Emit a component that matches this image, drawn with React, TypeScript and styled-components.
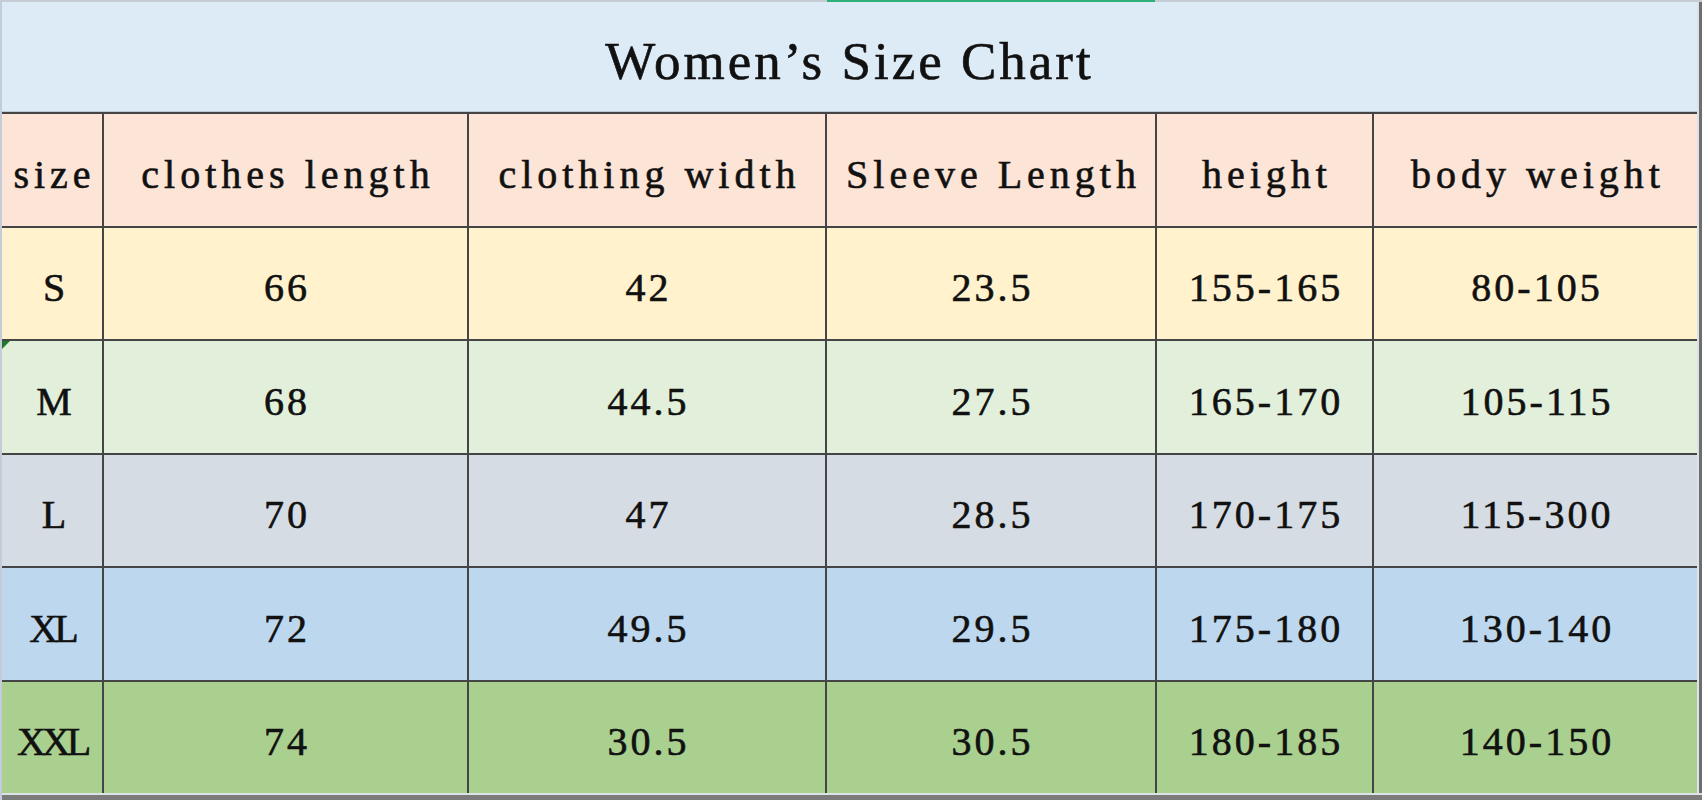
import { createGlobalStyle } from 'styled-components';
import styled from 'styled-components';

const GlobalStyle = createGlobalStyle`
	html, body {
		margin: 0;
		padding: 0;
		background: #ffffff;
	}
	body {
		font-family: 'Liberation Serif', 'Noto Sans CJK SC', serif;
		color: #111;
	}
`;

const COLS = '100px 363px 356px 328px 215px 323px';

const headers = [
	'size',
	'clothes length',
	'clothing width',
	'Sleeve Length',
	'height',
	'body weight',
];

const rows = [
	{ size: 'S', bg: '#fff2cc', values: ['66', '42', '23.5', '155-165', '80-105'] },
	{ size: 'M', bg: '#e2efda', values: ['68', '44.5', '27.5', '165-170', '105-115'], flag: true },
	{ size: 'L', bg: '#d6dce4', values: ['70', '47', '28.5', '170-175', '115-300'] },
	{ size: 'XL', bg: '#bdd7ee', values: ['72', '49.5', '29.5', '175-180', '130-140'] },
	{ size: 'XXL', bg: '#a9d08e', values: ['74', '30.5', '30.5', '180-185', '140-150'] },
];

export default function App() {
	return (
		<>
			<GlobalStyle />
			<Sheet>
				<TopStrip>
					<StripCell />
					<StripCell />
					<StripCell />
					<StripCell $active />
					<StripCell />
					<StripCell />
				</TopStrip>
				<Body>
					<Table>
						<Title>Women’s Size Chart</Title>
						{headers.map((h) => (
							<Cell key={h} $bg="#fce4d6" $spacing={5}>
								{h}
							</Cell>
						))}
						{rows.map((r) => (
							<Row key={r.size} {...r} />
						))}
					</Table>
					<RightEdge />
				</Body>
				<BottomEdge />
			</Sheet>
		</>
	);
}

const Row = ({
	size,
	bg,
	values,
	flag,
}: {
	size: string;
	bg: string;
	values: string[];
	flag?: boolean;
}) => (
	<>
		<Cell $bg={bg} $spacing={-4} $flag={flag}>
			{size}
		</Cell>
		{values.map((v, i) => (
			<Cell key={i} $bg={bg} $spacing={3}>
				{v}
			</Cell>
		))}
	</>
);

const Sheet = styled.div`
	width: 1702px;
	height: 800px;
	display: flex;
	flex-direction: column;
	box-sizing: border-box;
	border-left: 2px solid #c3ccd8;
	overflow: hidden;
`;

const TopStrip = styled.div`
	display: grid;
	grid-template-columns: ${COLS} 1fr;
	column-gap: 2px;
	height: 2px;
	background: #c6ccd4;
`;

const StripCell = styled.div<{ $active?: boolean }>`
	background: ${({ $active }) => ($active ? '#2fb07a' : '#c6ccd4')};
`;

const Body = styled.div`
	flex: 1;
	display: flex;
`;

const Table = styled.div`
	display: grid;
	grid-template-columns: ${COLS};
	grid-template-rows: 110px repeat(6, 1fr);
	gap: 2px;
	background: #454545;
`;

const Title = styled.div`
	grid-column: 1 / -1;
	display: flex;
	align-items: center;
	justify-content: center;
	padding-top: 8px;
	background: #ddebf7;
	font-size: 53px;
	letter-spacing: 3px;
	-webkit-text-stroke: 0.6px #111;
	border-bottom: 1px solid #b9c9d9;
`;

const Cell = styled.div<{ $bg: string; $spacing: number; $flag?: boolean }>`
	position: relative;
	display: flex;
	align-items: center;
	justify-content: center;
	padding-top: 9px;
	padding-left: ${({ $spacing }) => $spacing}px;
	background: ${({ $bg }) => $bg};
	font-size: 40px;
	letter-spacing: ${({ $spacing }) => $spacing}px;
	-webkit-text-stroke: 0.6px #111;
	white-space: nowrap;

	&::before {
		content: '';
		display: ${({ $flag }) => ($flag ? 'block' : 'none')};
		position: absolute;
		top: 0;
		left: 0;
		border-top: 8px solid #1e7b2e;
		border-right: 8px solid transparent;
	}
`;

const RightEdge = styled.div`
	flex: 1;
	border-left: 2px solid #dde2e8;
	background: #6e6e6e;
`;

const BottomEdge = styled.div`
	height: 7px;
	box-sizing: border-box;
	border-top: 2px solid #dde2e8;
	background: #7b7b7b;
`;
